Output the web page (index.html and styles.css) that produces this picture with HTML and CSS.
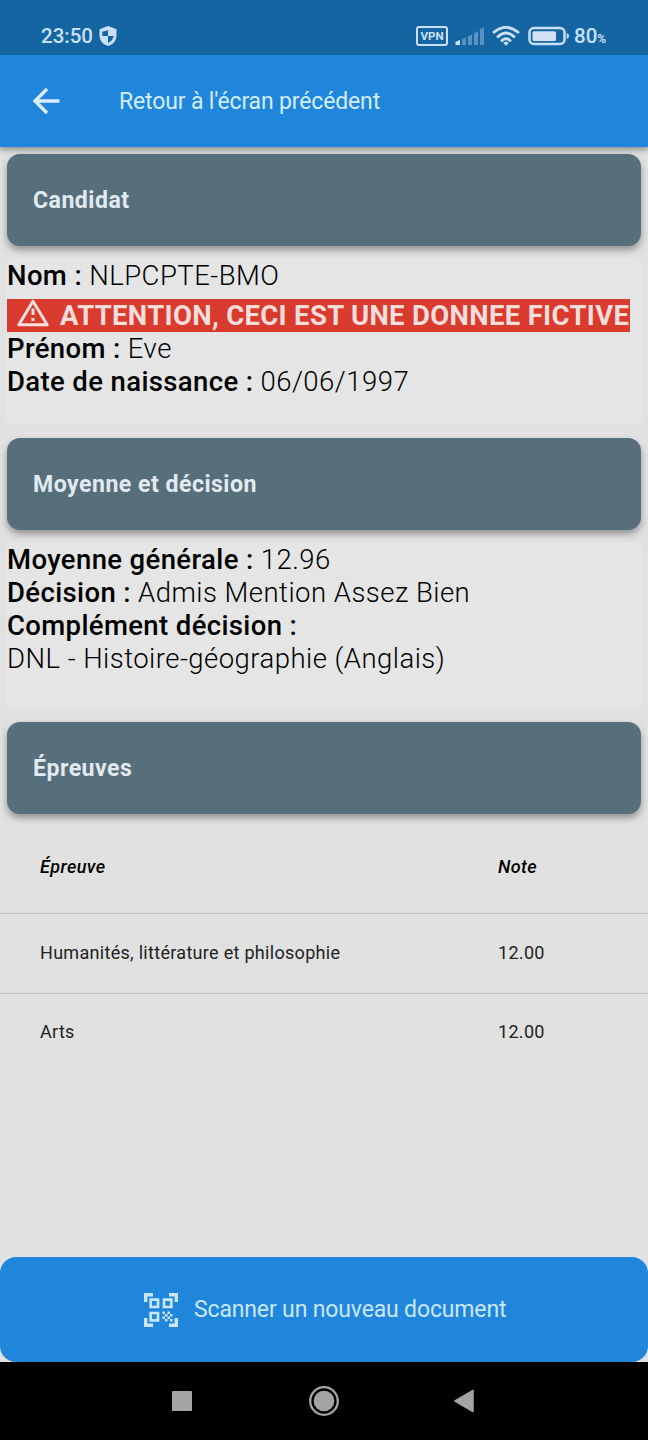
FILE: index.html
```html
<!DOCTYPE html>
<html lang="fr">
<head>
<meta charset="utf-8">
<title>Candidat</title>
<link rel="stylesheet" href="styles.css">
</head>
<body>
<div class="screen">
  <div class="status">
    <span class="clock">23:50</span>
    <svg class="shield" width="18" height="20" viewBox="0 0 18 20"><path d="M9 0 17.5 3.2V9.5C17.5 14.5 14 18.600 9 20 4 18.600.5 14.500.5 9.500V3.200Z" fill="#c9e0f8"/><path d="M9 4.200V10H3.300V5.800ZM9 10H14.700C14.300 13.400 12 15.800 9 16.900Z" fill="#1565a2"/></svg>
    <span class="vpn">VPN</span>
    <svg class="signal" width="30" height="20" viewBox="0 0 30 20"><path d="M.5 19V16Q2 14.800 5 14V19Z" fill="#c9e0f8"/><g fill="#5793c7"><path d="M7 13.200 11 11.500V19H7ZM13 10.400 17 8.400V19H13ZM19 7.200 23 5V19H19ZM25 3.500 29 1V19H25Z"/></g></svg>
    <svg class="wifi" width="28" height="20" viewBox="0 0 28 20" fill="none" stroke="#c9e0f8" stroke-width="2.900" stroke-linecap="round"><path d="M2 6.200Q14-3.600 26 6.200M6 10.600Q14 3.600 22 10.600M10 14.500Q14 10.800 18 14.500"/><path d="M11.300 17Q14 14.600 16.700 17L14 19.800Z" fill="#c9e0f8" stroke="none"/></svg>
    <svg class="battery" width="42" height="20" viewBox="0 0 42 20"><rect x="1.500" y="2" width="35" height="16" rx="4.500" fill="none" stroke="#c9e0f8" stroke-width="2.500"/><rect x="4.500" y="5.200" width="23.500" height="9.800" rx="1.500" fill="#d2e1f4"/><path d="M38.700 7Q41 7.500 41 10T38.700 13Z" fill="#c9e0f8"/></svg>
    <span class="level">80<small>%</small></span>
  </div>
  <header class="appbar">
    <svg class="back" width="28" height="28" viewBox="0 0 28 28" fill="none" stroke="#dceefc" stroke-width="3.300"><path d="M27.500 14H3M15 2 3 14 15 26"/></svg>
    <span class="title">Retour à l'écran précédent</span>
  </header>
  <main class="content">
    <h2 class="card"><span>Candidat</span></h2>
    <div class="panel">
      <div class="line"><b>Nom :</b> <span>NLPCPTE-BMO</span></div>
      <div class="warning"><svg width="34" height="30" viewBox="0 0 34 30"><path d="M17 3.200 31.200 26.800H2.800Z" fill="none" stroke="#f7dedb" stroke-width="3" stroke-linejoin="round"/><path d="M17 10.500V17M17 20V23" stroke="#f7dedb" stroke-width="3"/></svg><b>ATTENTION, CECI EST UNE DONNEE FICTIVE</b></div>
      <div class="line"><b>Prénom :</b> <span>Eve</span></div>
      <div class="line"><b>Date de naissance :</b> <span>06/06/1997</span></div>
    </div>
    <h2 class="card"><span>Moyenne et décision</span></h2>
    <div class="panel">
      <div class="line"><b>Moyenne générale :</b> <span>12.96</span></div>
      <div class="line"><b>Décision :</b> <span>Admis Mention Assez Bien</span></div>
      <div class="line"><b>Complément décision :</b></div>
      <div class="line"><span>DNL - Histoire-géographie (Anglais)</span></div>
    </div>
    <h2 class="card"><span>Épreuves</span></h2>
    <div class="grades">
      <div class="row head"><span>Épreuve</span><span>Note</span></div>
      <div class="row"><span>Humanités, littérature et philosophie</span><span>12.00</span></div>
      <div class="row"><span>Arts</span><span>12.00</span></div>
    </div>
  </main>
  <div class="scan">
    <svg width="34" height="34" viewBox="0 0 34 34" fill="none" stroke="#c9e6fb" stroke-width="3"><path d="M1.700 9V1.700H9M25 1.700H32.300V9M32.300 25V32.300H25M9 32.300H1.700V25" stroke-width="3.400"/><path d="M6.700 6.700H14V14H6.700ZM20 6.700H27.300V14H20ZM6.700 20H14V27.300H6.700Z" stroke-width="2.700"/><path d="M18.500 18.500h2.500v2.500h-2.500zM23.500 18.500h2.500v2.500h-2.500zM21 21h2.500v2.500h-2.500zM26 21h2.500v2.500h-2.500zM18.500 23.500h2.500v2.500h-2.500zM23.500 23.500h2.500v2.500h-2.500zM21 26h2.500v2.500h-2.500zM26 26h2.500v2.500h-2.500z" fill="#c9e6fb" stroke="none"/></svg>
    <span>Scanner un nouveau document</span>
  </div>
  <nav class="nav">
    <svg width="22" height="32" viewBox="0 0 22 32"><rect x="1" y="6" width="20" height="20" rx="1" fill="#a4a4a4"/></svg>
    <svg width="32" height="32" viewBox="0 0 32 32"><circle cx="17" cy="16" r="13.800" fill="none" stroke="#a4a4a4" stroke-width="2.300"/><circle cx="17" cy="16" r="10.300" fill="#a4a4a4"/></svg>
    <svg width="22" height="32" viewBox="0 0 22 32"><path d="M2 16 20 5.500V26.500Z" fill="#a4a4a4" stroke="#a4a4a4" stroke-width="1.500" stroke-linejoin="round"/></svg>
  </nav>
</div>
</body>
</html>
```
FILE: styles.css
```css
* { box-sizing: border-box; }
body { margin: 0; font-family: Roboto, "Liberation Sans", sans-serif; background: #e1e1e1; }
svg { display: block; flex: none; }
.screen { width: 648px; height: 1440px; display: flex; flex-direction: column; background: #e1e1e1; overflow: hidden; }
.status { height: 55px; flex: none; background: #1565a2; color: #c9e0f8; display: flex; align-items: center; padding: 17px 0 0 41px; }
.clock { font-size: 20.5px; font-weight: 500; width: 58px; white-space: nowrap; }
.vpn { margin-left: 299px; width: 32px; height: 20px; border: 2.500px solid #c9e0f8; border-radius: 3px; font-size: 11.5px; line-height: 16px; font-weight: 700; text-align: center; }
.signal { margin-left: 7px; }
.wifi { margin-left: 7px; }
.battery { margin-left: 8px; }
.level { margin-left: 4px; font-size: 20.5px; font-weight: 500; }
.level small { font-size: 12px; font-weight: 700; }
.appbar { height: 92px; flex: none; background: #2086db; display: flex; align-items: center; padding-left: 32px; box-shadow: 0 3px 6px rgba(0,0,0,.35); z-index: 1; }
.title { margin-left: 59px; font-size: 23px; letter-spacing: -.15px; color: #d3edfc; white-space: nowrap; }
.content { flex: 1; padding-top: 7px; }
.card { margin: 0 7px; height: 92px; border-radius: 13px; background: #576f7b; box-shadow: 0 4px 7px rgba(0,0,0,.35); color: #e1eaf1; display: flex; align-items: center; padding: 0 0 0 26px; font-size: 23.1px; letter-spacing: .48px; font-weight: 700; position: relative; }
.panel { margin: 12px 6px 14px; height: 166px; border-radius: 6px; background: #e5e5e5; padding: 1px 1px 0; color: #000; }
.line { height: 33px; line-height: 33px; font-size: 27.5px; font-weight: 300; letter-spacing: .47px; white-space: nowrap; }
.line b { font-weight: 500; letter-spacing: .37px; }
.warning { margin-top: 7px; width: 623px; height: 33px; background: #da3b2f; color: #f7dedb; display: flex; align-items: center; padding-left: 9px; font-size: 27.5px; white-space: nowrap; }
.warning svg { margin: -6px 10px 0 0; }
.warning b { font-weight: 700; letter-spacing: .32px; }
.grades { margin-top: 8px; }
.row { height: 79px; padding: 0 0 2px 40px; display: grid; grid-template-columns: 458px 1fr; align-items: center; font-size: 18px; letter-spacing: .3px; color: #222; }
.row + .row { border-top: 1.500px solid #c3c3c3; height: 79.500px; }
.row.head { height: 91px; font-style: italic; font-weight: 500; letter-spacing: .4px; color: #000; }
.scan { height: 105px; flex: none; border-radius: 16px; background: #2086db; display: flex; align-items: center; padding-left: 144px; gap: 16px; font-size: 23px; letter-spacing: -.15px; color: #c9e6fb; white-space: nowrap; }
.nav { height: 78px; flex: none; background: #000; display: flex; align-items: center; justify-content: space-between; padding: 0 173px 0 171px; }
```
